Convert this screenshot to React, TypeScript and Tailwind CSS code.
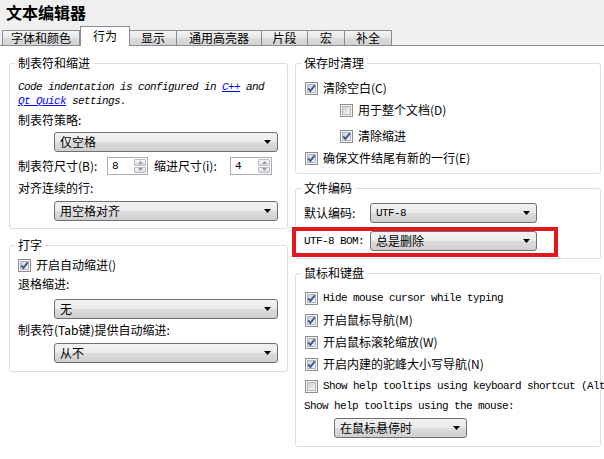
import React from "react";

const cjk = "font-['Noto_Sans_CJK_SC',sans-serif] text-[12px] leading-[14px]";
const mono = "font-['Liberation_Mono','Noto_Sans_CJK_SC',monospace] text-[11px] leading-[14px] tracking-[-0.6px]";

function Box({ checked }: { checked?: boolean }) {
  return (
    <svg width="13" height="13" viewBox="0 0 13 13" className="shrink-0">
      <defs>
        <linearGradient id="cbfill" x1="0" y1="0" x2="1" y2="1">
          <stop offset="0" stopColor="#cbcfd5" />
          <stop offset="1" stopColor="#f7f7f7" />
        </linearGradient>
      </defs>
      <rect x="0.5" y="0.5" width="12" height="12" fill="#f4f4f4" stroke="#8e8f8f" />
      <rect x="2.5" y="2.5" width="8" height="8" fill="url(#cbfill)" stroke="#b4b8bc" />
      {checked && (
        <path d="M3.2 6.4 L5.4 8.9 L9.8 3.4" fill="none" stroke="#3c5a9c" strokeWidth="1.9" />
      )}
    </svg>
  );
}

function CheckRow({ checked, children, className = "" }: { checked?: boolean; children: React.ReactNode; className?: string }) {
  return (
    <div className={`flex h-[14px] items-center gap-[5px] whitespace-nowrap ${className}`}>
      <Box checked={checked} />
      {children}
    </div>
  );
}

function Combo({ text, className = "", textClass = cjk }: { text: string; className?: string; textClass?: string }) {
  return (
    <div
      className={`flex h-[20px] items-center justify-between rounded-[3px] border border-[#707070] bg-[linear-gradient(#f2f2f2,#ebebeb_50%,#dddddd_50%,#cfcfcf)] pl-[5px] pr-[6px] ${className}`}
    >
      <span className={textClass}>{text}</span>
      <svg width="7" height="4" viewBox="0 0 7 4">
        <path d="M0 0H7L3.5 4Z" fill="#000" />
      </svg>
    </div>
  );
}

function Spin({ value, className = "" }: { value: string; className?: string }) {
  return (
    <div className={`flex h-[18px] items-stretch border border-[#abadb3] bg-white ${className}`}>
      <span className={`flex flex-1 items-center pl-[4px] ${mono}`}>{value}</span>
      <div className="flex w-[14px] flex-col gap-px p-px">
        <div className="flex flex-1 items-center justify-center rounded-[1px] border border-[#b9bcc1] bg-[linear-gradient(#f6f6f6,#dcdcdc)]">
          <svg width="5" height="3" viewBox="0 0 5 3">
            <path d="M0 3H5L2.5 0Z" fill="#8a9bb3" />
          </svg>
        </div>
        <div className="flex flex-1 items-center justify-center rounded-[1px] border border-[#b9bcc1] bg-[linear-gradient(#f6f6f6,#dcdcdc)]">
          <svg width="5" height="3" viewBox="0 0 5 3">
            <path d="M0 0H5L2.5 3Z" fill="#8a9bb3" />
          </svg>
        </div>
      </div>
    </div>
  );
}

function Group({ title, children, className = "" }: { title: string; children: React.ReactNode; className?: string }) {
  return (
    <fieldset className={`min-w-0 rounded-[3px] border border-[#d5dfe5] px-[8px] ${className}`}>
      <legend className={`-ml-[3px] h-[14px] px-[3px] ${cjk}`}>{title}</legend>
      {children}
    </fieldset>
  );
}

const tabs = [
  { label: "字体和颜色", w: "w-[78px]" },
  { label: "行为", w: "w-[50px]", active: true },
  { label: "显示", w: "w-[47px]" },
  { label: "通用高亮器", w: "w-[85px]" },
  { label: "片段", w: "w-[46px]" },
  { label: "宏", w: "w-[37px]" },
  { label: "补全", w: "w-[47px]" },
];

export default function App() {
  return (
    <div className="h-[459px] w-[604px] overflow-hidden bg-white text-black">
      {/* header + tabs */}
      <div className="h-[46px] bg-[#f0f0f0]">
        <div className="flex h-[26px] items-center pl-[6px] pb-[2px]">
          <span className="font-['Noto_Sans_CJK_SC',sans-serif] text-[16px] font-bold leading-[18px]">文本编辑器</span>
        </div>
        <div className="flex h-[20px] items-end border-b border-[#898c95] pl-[2px]">
          {tabs.map((t) =>
            t.active ? (
              <div
                key={t.label}
                className={`-mb-px flex h-[20px] items-center justify-center border border-b-0 border-[#898c95] bg-white pb-[2px] ${t.w} ${cjk}`}
              >
                {t.label}
              </div>
            ) : (
              <div
                key={t.label}
                className={`flex h-[15px] items-center justify-center border border-b-0 border-l-0 border-[#898c95] bg-[linear-gradient(#f3f3f3,#e9e9e9_50%,#dcdcdc_50%,#d4d4d4)] first:border-l ${t.w} ${cjk}`}
              >
                {t.label}
              </div>
            )
          )}
        </div>
      </div>

      {/* content */}
      <div className="flex gap-[7px] pl-[9px] pt-[10px]">
        {/* left column */}
        <div className="flex w-[279px] shrink-0 flex-col">
          <Group title="制表符和缩进" className="pb-[7px]">
            <div className={`mt-[10px] whitespace-nowrap italic ${mono}`}>
              Code indentation is configured in <span className="text-[#0000ff] underline">C++</span> and
            </div>
            <div className={`whitespace-nowrap italic ${mono}`}>
              <span className="text-[#0000ff] underline">Qt Quick</span> settings.
            </div>
            <div className={`mt-[5px] ${cjk}`}>制表符策略:</div>
            <Combo text="仅空格" className="ml-[36px] mt-[5px] w-[224px]" />
            <div className={`mt-[5px] flex h-[18px] items-center whitespace-nowrap ${cjk}`}>
              <span className="w-[89px]">制表符尺寸(B):</span>
              <Spin value="8" className="w-[41px]" />
              <span className="ml-[6px] w-[76px]">缩进尺寸(i):</span>
              <Spin value="4" className="w-[42px]" />
            </div>
            <div className={`mt-[6px] ${cjk}`}>对齐连续的行:</div>
            <Combo text="用空格对齐" className="ml-[36px] mt-[6px] w-[224px]" />
          </Group>

          <Group title="打字" className="mt-[9px] pb-[8px]">
            <CheckRow checked className={`mt-[6px] ${cjk}`}>
              <span>开启自动缩进()</span>
            </CheckRow>
            <div className={`mt-[5px] ${cjk}`}>退格缩进:</div>
            <Combo text="无" className="ml-[36px] mt-[8px] w-[224px]" />
            <div className={`mt-[4px] ${cjk}`}>制表符(Tab键)提供自动缩进:</div>
            <Combo text="从不" className="ml-[36px] mt-[6px] w-[224px]" />
          </Group>
        </div>

        {/* right column */}
        <div className="flex w-[306px] shrink-0 flex-col">
          <Group title="保存时清理" className="pb-[8px]">
            <CheckRow checked className={`mt-[11px] pl-px ${cjk}`}>
              <span>清除空白(C)</span>
            </CheckRow>
            <CheckRow className={`mt-[8px] pl-[36px] ${cjk}`}>
              <span>用于整个文档(D)</span>
            </CheckRow>
            <CheckRow checked className={`mt-[12px] pl-[36px] ${cjk}`}>
              <span>清除缩进</span>
            </CheckRow>
            <CheckRow checked className={`mt-[8px] pl-px ${cjk}`}>
              <span>确保文件结尾有新的一行(E)</span>
            </CheckRow>
          </Group>

          <Group title="文件编码" className="mt-[7px] pb-[7px]">
            <div className="mt-[8px] flex items-center">
              <span className={`w-[66px] ${cjk}`}>默认编码:</span>
              <Combo text="UTF-8" textClass={mono} className="w-[167px]" />
            </div>
            <div className="relative mt-[8px] flex items-center">
              <span className={`w-[66px] whitespace-nowrap ${mono}`}>UTF-8 BOM:</span>
              <Combo text="总是删除" className="w-[167px]" />
              <div className="pointer-events-none absolute -left-[12px] -top-[4px] h-[30px] w-[266px] border-4 border-[#e3151f]" />
            </div>
          </Group>

          <Group title="鼠标和键盘" className="mt-[7px] pb-[8px]">
            <CheckRow checked className={`mt-[11px] pl-px ${mono}`}>
              <span>Hide mouse cursor while typing</span>
            </CheckRow>
            <CheckRow checked className={`mt-[8px] pl-px ${cjk}`}>
              <span>开启鼠标导航(M)</span>
            </CheckRow>
            <CheckRow checked className={`mt-[8px] pl-px ${cjk}`}>
              <span>开启鼠标滚轮缩放(W)</span>
            </CheckRow>
            <CheckRow checked className={`mt-[8px] pl-px ${cjk}`}>
              <span>开启内建的驼峰大小写导航(N)</span>
            </CheckRow>
            <CheckRow className={`mt-[8px] pl-px ${mono}`}>
              <span>Show help tooltips using keyboard shortcut (Alt)</span>
            </CheckRow>
            <div className={`mt-[6px] whitespace-nowrap ${mono}`}>Show help tooltips using the mouse:</div>
            <Combo text="在鼠标悬停时" className="ml-[30px] mt-[5px] w-[133px]" />
          </Group>
        </div>
      </div>
    </div>
  );
}
